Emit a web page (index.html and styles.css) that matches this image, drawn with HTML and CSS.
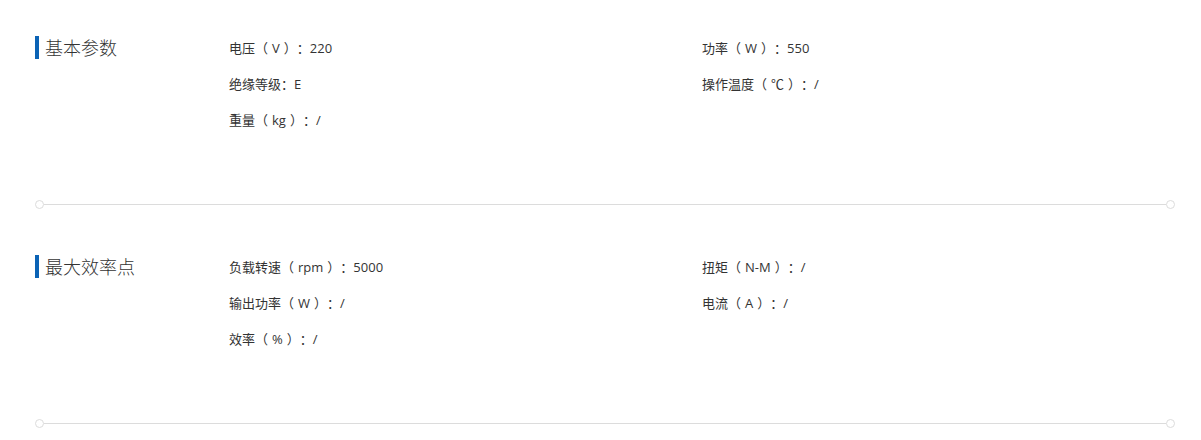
FILE: index.html
```html
<!DOCTYPE html>
<html lang="zh-CN">
<head>
<meta charset="utf-8">
<title>参数</title>
<link rel="stylesheet" href="styles.css">
</head>
<body>
<div class="page">
  <section class="spec">
    <div class="spec-body">
      <h2 class="spec-title">基本参数</h2>
      <ul class="spec-list">
        <li>电压（<span class="u">V</span>）：220</li>
        <li>功率（<span class="u">W</span>）：550</li>
        <li>绝缘等级：E</li>
        <li>操作温度（<span class="u">℃</span>）：/</li>
        <li>重量（<span class="u">kg</span>）：/</li>
      </ul>
    </div>
    <div class="divider"><span class="dot"></span><span class="line"></span><span class="dot"></span></div>
  </section>
  <section class="spec">
    <div class="spec-body">
      <h2 class="spec-title">最大效率点</h2>
      <ul class="spec-list">
        <li>负载转速（<span class="u">rpm</span>）：5000</li>
        <li>扭矩（<span class="u">N-M</span>）：/</li>
        <li>输出功率（<span class="u">W</span>）：/</li>
        <li>电流（<span class="u">A</span>）：/</li>
        <li>效率（<span class="u">%</span>）：/</li>
      </ul>
    </div>
    <div class="divider"><span class="dot"></span><span class="line"></span><span class="dot"></span></div>
  </section>
</div>
</body>
</html>
```
FILE: styles.css
```css
* { box-sizing: border-box; }
html, body { margin: 0; padding: 0; background: #fff; }
body {
  font-family: "Open Sans", "Noto Sans CJK TC", "Noto Sans CJK SC", sans-serif;
  color: #333;
  text-spacing-trim: space-all;
  font-kerning: none;
}
.page {
  width: 1140px;
  margin-left: 35px;
  padding-top: 30px;
}
.spec + .spec { margin-top: 40px; }
.spec-body {
  display: flex;
  align-items: flex-start;
}
.spec-title {
  width: 194px;
  flex: none;
  margin: 6px 0 0;
  border-left: 4px solid #0b63b5;
  padding-left: 6px;
  font-family: "Noto Sans CJK SC", sans-serif;
  font-size: 18px;
  font-weight: 300;
  line-height: 23px;
  height: 23px;
  color: #333;
}
.spec-list {
  list-style: none;
  margin: 0;
  padding: 0;
  flex: 1;
  display: grid;
  grid-template-columns: 473px 1fr;
}
.spec-list li {
  font-size: 13px;
  line-height: 36px;
  height: 36px;
  white-space: nowrap;
}
.u { margin: 0 4px; }
.divider {
  margin-top: 62px;
  display: flex;
  align-items: center;
  height: 9px;
}
.dot {
  width: 9px;
  height: 9px;
  border: 1px solid #dcdcdc;
  border-radius: 50%;
  flex: none;
  background: #fff;
}
.line {
  flex: 1;
  height: 1px;
  background: #dcdcdc;
}
```
